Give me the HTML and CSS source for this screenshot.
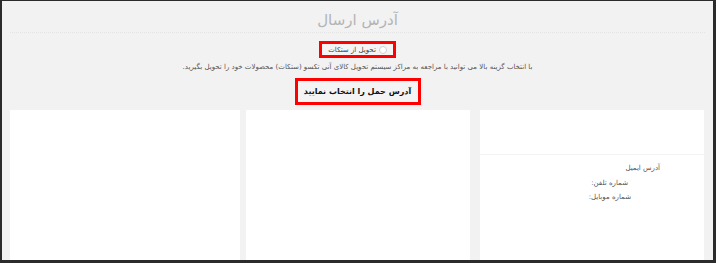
FILE: index.html
```html
<!DOCTYPE html>
<html lang="fa" dir="rtl">
<head>
<meta charset="utf-8">
<link rel="stylesheet" href="styles.css">
</head>
<body>
<div class="frame">
  <h1 class="title">آدرس ارسال</h1>
  <div class="center">
    <label class="option"><span class="radio"></span>تحویل از ستکات</label>
  </div>
  <p class="desc">با انتخاب گزینه بالا می توانید با مراجعه به مراکز سیستم تحویل کالای آنی تکسو (ستکات) محصولات خود را تحویل بگیرید.</p>
  <div class="center">
    <div class="pick">آدرس حمل را انتخاب نمایید</div>
  </div>
  <div class="cards">
    <div class="card card-info">
      <div class="card-top"></div>
      <div class="card-body">
        <div class="line l1">آدرس ایمیل</div>
        <div class="line l2">شماره تلفن:</div>
        <div class="line l3">شماره موبایل:</div>
      </div>
    </div>
    <div class="card card-mid"></div>
    <div class="card card-left"></div>
  </div>
</div>
</body>
</html>
```

FILE: styles.css
```css
html, body {
  margin: 0;
  padding: 0;
  background: #2b2b2b;
}
.frame {
  width: 716px;
  height: 263px;
  box-sizing: border-box;
  border: 2px solid #2b2b2b;
  border-top-width: 1px;
  border-right-width: 3px;
  border-bottom-width: 3px;
  background: #f2f2f2;
  font-family: "DejaVu Sans", sans-serif;
  overflow: hidden;
  display: flex;
  flex-direction: column;
}
.title {
  margin: 0 8px;
  padding-top: 10px;
  height: 21px;
  font-size: 15px;
  font-weight: normal;
  color: #b4b4b4;
  text-align: center;
  line-height: 18px;
  border-bottom: 1px dotted #e4e4e4;
}
.center {
  display: flex;
  justify-content: center;
}
.option {
  margin-top: 8px;
  box-sizing: border-box;
  width: 77px;
  height: 17px;
  border: 3px solid #ff0000;
  background: #f4f4f4;
  font-size: 7px;
  color: #444;
  display: flex;
  align-items: center;
  justify-content: center;
  gap: 3px;
}
.radio {
  width: 6px;
  height: 6px;
  border: 1px solid #cfcfcf;
  border-radius: 50%;
  background: #fff;
}
.desc {
  margin: 4px 0 0;
  font-size: 7px;
  line-height: 10px;
  color: #555;
  text-align: center;
}
.pick {
  margin-top: 6px;
  box-sizing: border-box;
  width: 126px;
  height: 27px;
  border: 3px solid #ff0000;
  background: #f4f4f4;
  font-size: 8px;
  font-weight: bold;
  color: #111;
  white-space: nowrap;
  display: flex;
  align-items: center;
  justify-content: center;
}
.cards {
  flex: 1;
  margin-top: 5px;
  padding: 0 9px 0 8px;
  display: flex;
  gap: 10px;
}
.card {
  background: #fff;
}
.card-info { width: 224px; }
.card-mid { width: 224px; }
.card-left { width: 230px; margin-right: -4px; }
.card-top {
  height: 44px;
  border-bottom: 1px solid #f3f3f3;
}
.card-body {
  padding-top: 8px;
  font-size: 7px;
  color: #555;
}
.line {
  height: 14.5px;
  line-height: 10px;
}
.l1 { padding-right: 44px; }
.l2 { padding-right: 76px; }
.l3 { padding-right: 73px; }
```
